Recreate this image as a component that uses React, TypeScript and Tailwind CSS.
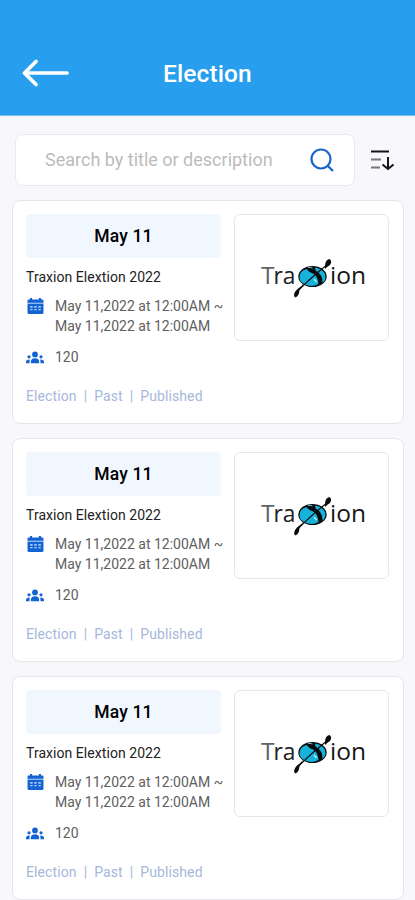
const elections = [
  { id: 1, day: 'May 11', title: 'Traxion Elextion 2022', voters: 120 },
  { id: 2, day: 'May 11', title: 'Traxion Elextion 2022', voters: 120 },
  { id: 3, day: 'May 11', title: 'Traxion Elextion 2022', voters: 120 },
];

function CalendarIcon() {
  return (
    <svg width="17" height="17" viewBox="0 0 16 17" preserveAspectRatio="none" className="mt-px shrink-0">
      <path d="M2.800 0h2v1.600h6.400V0h2v1.600h1.300q1 0 1 1V5H.5V2.600q0-1 1-1h1.300z" fill="#1463d2" />
      <path d="M.5 4.600h15v1.400H.5z" fill="#8bb5ef" />
      <path d="M.5 6h15v8.700q0 1.300-1.300 1.300H1.800Q.5 16 .5 14.700z" fill="#1463d2" />
      <path d="M3 8h2.300v1.700H3zM6.800 8h2.300v1.700H6.800zM10.700 8H13v1.700h-2.300zM3 11h2.300v1.200H3zM6.800 11h2.300v1.200H6.800zM10.700 11H13v1.200h-2.300z" fill="#a9caf5" />
    </svg>
  );
}

function GroupIcon() {
  return (
    <svg width="18" height="13" viewBox="0 0 18 13" className="-mr-px shrink-0" fill="#1463d2">
      <circle cx="9" cy="3.400" r="2.900" />
      <circle cx="3" cy="5.800" r="1.600" />
      <circle cx="15" cy="5.800" r="1.600" />
      <path d="M4.900 12.300v-2Q5.200 7.200 9 7.200t4.100 3.100v2zM0 12.300v-1.500q.3-2.200 3.800-2.200-.3 1-.3 3.700zM18 12.300v-1.500q-.3-2.200-3.800-2.200.3 1 .3 3.700z" />
    </svg>
  );
}

function TraxionLogo() {
  return (
    <svg width="108" height="44" viewBox="0 0 108 44" className="font-[Open_Sans,sans-serif]">
      <text x="3" y="27.500" fontSize="24" textLength="13.500" lengthAdjust="spacingAndGlyphs" fill="#626262">T</text>
      <text x="15.500" y="27.500" fontSize="24" textLength="22" lengthAdjust="spacingAndGlyphs" fill="#202020">ra</text>
      <text x="72" y="27.500" fontSize="24" textLength="36" lengthAdjust="spacingAndGlyphs" fill="#171717">ion</text>
      <ellipse cx="54.500" cy="20.500" rx="14.200" ry="10.600" fill="#080b0d" />
      <path d="M41.500 22Q41.500 14.500 48.500 13Q51 16.500 55 17.500Q60 20 60.500 28Q54 31.500 47 28.500Q42 26 41.500 22Z" fill="#16b2d9" />
      <path d="M57 11.500Q64 12.500 67 18Q68.500 24 64.500 27Q65 18.500 57.500 14.500Z" fill="#16b2d9" />
      <path d="M50 11.500Q52 11 54.500 12" fill="none" stroke="#79c6d5" strokeWidth="1" />
      <path d="M56 23L58.500 26" stroke="#a8edf8" strokeWidth="1.500" />
      <path d="M39 36Q50 24 70 8" fill="none" stroke="#080b0d" strokeWidth="1.100" />
      <path d="M37 41.500Q34.500 38 39 33.500Q44 30 46 27Q44 31 41.500 34Q41 41 37 41.500ZM67 10Q67 4 71.500 3Q74.500 5 72 9Q70 10 67 13Z" fill="#080b0d" />
    </svg>
  );
}

function ElectionCard({ day, title, voters }: { day: string; title: string; voters: number }) {
  return (
    <article className="flex h-[224px] shrink-0 justify-between rounded-lg border border-[#e6e6eb] bg-white px-[13px] pt-[13px]">
      <div className="w-[200px] whitespace-nowrap">
        <div className="flex h-[44px] w-[195px] items-center justify-center rounded-[4px] bg-[#f1f7ff] pt-px text-[17.5px] font-medium tracking-[0.15px]">{day}</div>
        <h2 className="mt-[9px] h-5 text-[14px] leading-5 tracking-[0.05px] text-[#222]">{title}</h2>
        <div className="mt-[10px] flex gap-[11px] pl-px">
          <CalendarIcon />
          <p className="-mt-px text-[14px] leading-5 text-[#606060]">
            May 11,2022 at 12:00AM ~<br />May 11,2022 at 12:00AM
          </p>
        </div>
        <div className="mt-[11px] flex h-5 items-center gap-[12px]">
          <GroupIcon />
          <span className="text-[14px] text-[#606060]">{voters}</span>
        </div>
        <div className="mt-[19px] flex h-5 items-center gap-[7px] text-[14px] tracking-[0.1px] text-[#a6b8da]">
          <span>Election</span><span>|</span><span>Past</span><span>|</span><span>Published</span>
        </div>
      </div>
      <div className="mr-px flex h-[127px] w-[155px] items-center justify-center rounded-md border border-[#e7e7ea]">
        <TraxionLogo />
      </div>
    </article>
  );
}

export default function App() {
  return (
    <main className="h-[900px] w-[415px] overflow-hidden bg-[#f7f7fc] font-[Roboto,sans-serif] text-black">
      <header className="flex h-[116px] items-end border-b border-[#78bdf0] bg-[#279eee] pb-[22px]">
        <svg width="48" height="30" viewBox="0 0 48 30" className="mb-[5px] ml-[22px]" fill="none" stroke="white" strokeWidth="3.700" strokeLinecap="round" strokeLinejoin="round">
          <path d="M45 15H3M14 3.500L2.500 15L14 26.500" />
        </svg>
        <h1 className="ml-[93px] text-[24.5px] leading-[38px] font-medium tracking-[0.1px] text-white">Election</h1>
      </header>
      <div className="flex h-[84px] items-center gap-[15px] pt-[4px] pl-[15px]">
        <div className="flex h-[52px] w-[340px] items-center justify-between rounded-lg border border-[#e9e9ee] bg-white pr-[20px] pl-[29px]">
          <span className="text-[18px] leading-[26px] text-[#bcbcbc]">Search by title or description</span>
          <svg width="24" height="24" viewBox="0 0 24 24" fill="none" stroke="#1765cb" strokeWidth="2.200">
            <circle cx="11" cy="11" r="9.500" /><path d="M17.500 17.500L23 23" />
          </svg>
        </div>
        <svg width="25" height="22" viewBox="0 0 25 22" fill="none" strokeWidth="2">
          <path d="M1 2.500H19M18 8V20" stroke="#151515" />
          <path d="M12.500 15.500L18 20L23.500 15.500" stroke="#151515" />
          <path d="M1 10.500H11M1 18.500H10" stroke="#777" />
        </svg>
      </div>
      <div className="flex flex-col gap-[14px] pr-[11px] pl-[12px]">
        {elections.map((election) => <ElectionCard key={election.id} day={election.day} title={election.title} voters={election.voters} />)}
      </div>
    </main>
  );
}
